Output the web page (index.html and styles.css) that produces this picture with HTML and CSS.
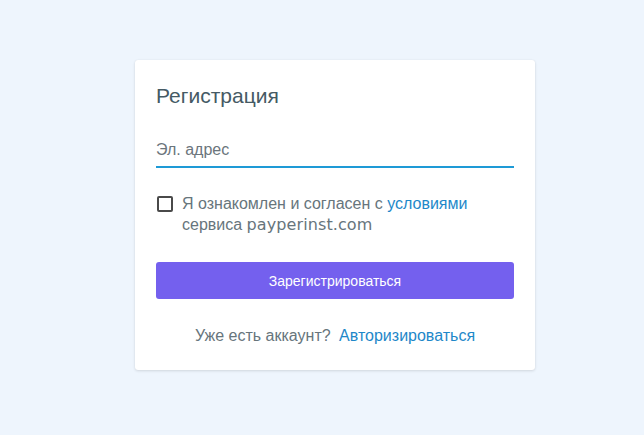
FILE: index.html
```html
<!DOCTYPE html>
<html lang="ru">
<head>
<meta charset="utf-8">
<link rel="stylesheet" href="styles.css">
</head>
<body>
<div class="page">
  <div class="card">
    <h1 class="title">Регистрация</h1>
    <div class="field">
      <span class="placeholder">Эл. адрес</span>
    </div>
    <div class="agree">
      <span class="checkbox"></span>
      <p class="agree-text">Я ознакомлен и согласен с <a class="link" href="#">условиями</a><br>сервиса <span class="brand">payperinst.com</span></p>
    </div>
    <button class="btn">Зарегистрироваться</button>
    <p class="login">Уже есть аккаунт? <a class="link" href="#">Авторизироваться</a></p>
  </div>
</div>
</body>
</html>
```
FILE: styles.css
```css
html, body {
  margin: 0;
  padding: 0;
  height: 100%;
}
body {
  background: #eef5fd;
  font-family: "Liberation Sans", Arial, sans-serif;
}
.page {
  padding: 60px 0 0 135px;
}
.card {
  height: 310px;
  box-sizing: border-box;
  width: 400px;
  padding: 24px 21px 0 21px;
  background: #fff;
  border-radius: 3px;
  box-shadow: 0 1px 3px rgba(0, 0, 0, 0.12), 0 0 1px rgba(0, 0, 0, 0.08);
}
.title {
  margin: 0;
  font-size: 21px;
  font-weight: normal;
  color: #455a64;
  line-height: 24px;
}
.field {
  margin-top: 28px;
  border-bottom: 2px solid #1e9ad6;
  display: flex;
  align-items: center;
  padding-bottom: 3px;
  box-sizing: border-box;
  height: 32px;
}
.placeholder {
  font-size: 16px;
  color: #6b757c;
}
.agree {
  margin-top: 28px;
  display: flex;
  align-items: flex-start;
  gap: 9px;
}
.checkbox {
  flex: none;
  width: 12px;
  height: 12px;
  margin-top: 0;
  margin-left: 1px;
  border: 2px solid #4a4a4a;
  border-radius: 2px;
}
.agree-text {
  margin: 0;
  font-size: 16px;
  line-height: 21px;
  color: #67757c;
  margin-top: -3px;
}
.link {
  color: #1e88c9;
  text-decoration: none;
}
.brand {
  font-family: "DejaVu Sans", sans-serif;
  font-size: 16px;
  letter-spacing: 0.1px;
}
.btn {
  display: block;
  width: 100%;
  height: 37px;
  margin-top: 27px;
  border: none;
  border-radius: 3px;
  background: #7460ee;
  color: #fff;
  font-family: "Liberation Sans", Arial, sans-serif;
  font-size: 14px;
}
.login {
  margin: 28px 0 0;
  text-align: center;
  font-size: 16px;
  color: #67757c;
}
.login .link {
  margin-left: 4px;
}
```
